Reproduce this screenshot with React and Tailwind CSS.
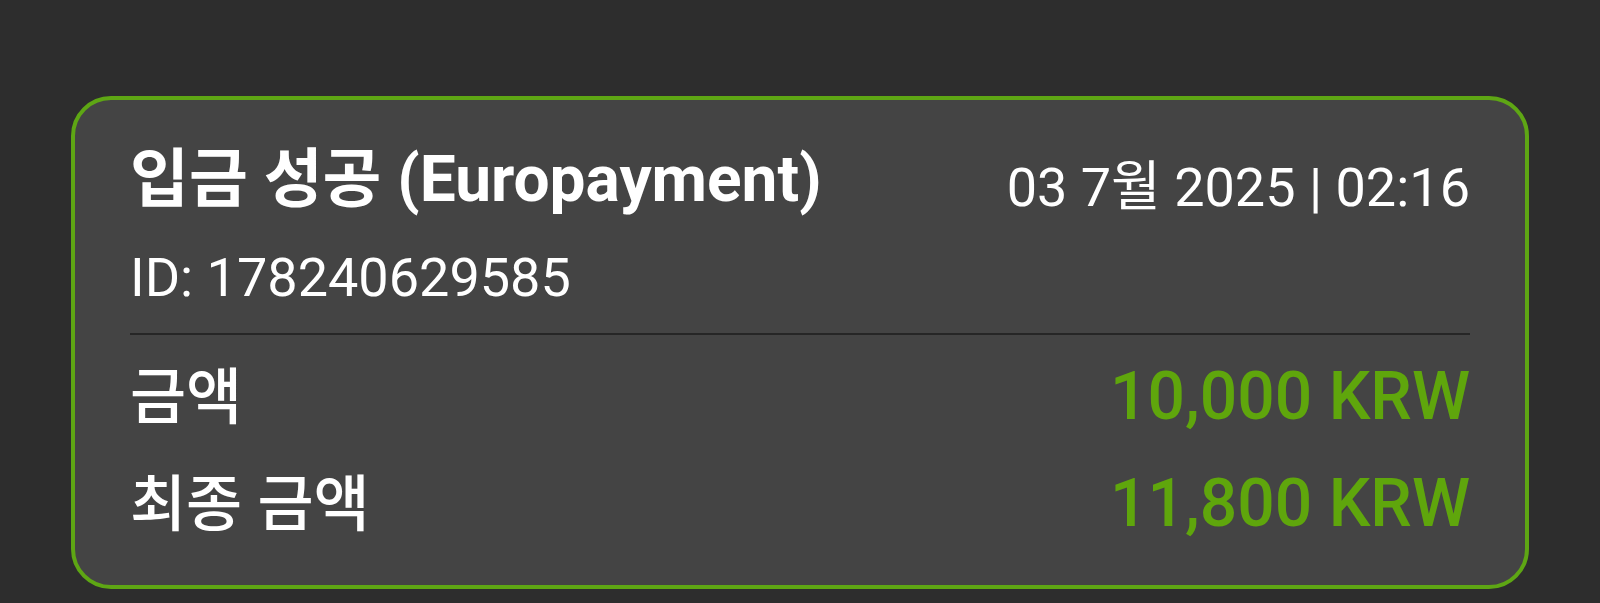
import React from "react";

const rows = [
  { label: "금액", value: "10,000 KRW" },
  { label: "최종 금액", value: "11,800 KRW" },
];

const TransactionCard = () => {
  return (
    <div className="rounded-[40px] border-[4px] border-[#5ea614] bg-[#444444] px-[55px] pt-[42px] pb-[40px]">
      {/* Header */}
      <div className="flex items-start justify-between">
        <h2 className="text-[64px] leading-[76px] font-bold text-white">
          입금 성공 (Europayment)
        </h2>
        <span className="mt-[14px] text-[54px] leading-[64px] text-white">
          03 7월 2025 | 02:16
        </span>
      </div>
      <p className="mt-[26px] text-[54px] leading-[64px] text-white">ID: 178240629585</p>

      <div className="mt-[23px] h-[2px] bg-[#262626]"></div>

      {/* Amounts */}
      <div className="mt-[22px] flex flex-col gap-[26px]">
        {rows.map((row) => (
          <div key={row.label} className="flex items-baseline justify-between leading-[80px]">
            <span className="-mt-[4px] text-[61px] font-medium text-white">{row.label}</span>
            <span className="text-[66px] font-medium text-[#5fa60c]">{row.value}</span>
          </div>
        ))}
      </div>
    </div>
  );
};

export default function App() {
  return (
    <div
      className="min-h-[603px] bg-[#2d2d2d] px-[71px] pt-[96px]"
      style={{ fontFamily: "Roboto, 'Noto Sans CJK KR', sans-serif" }}
    >
      <TransactionCard />
    </div>
  );
}
